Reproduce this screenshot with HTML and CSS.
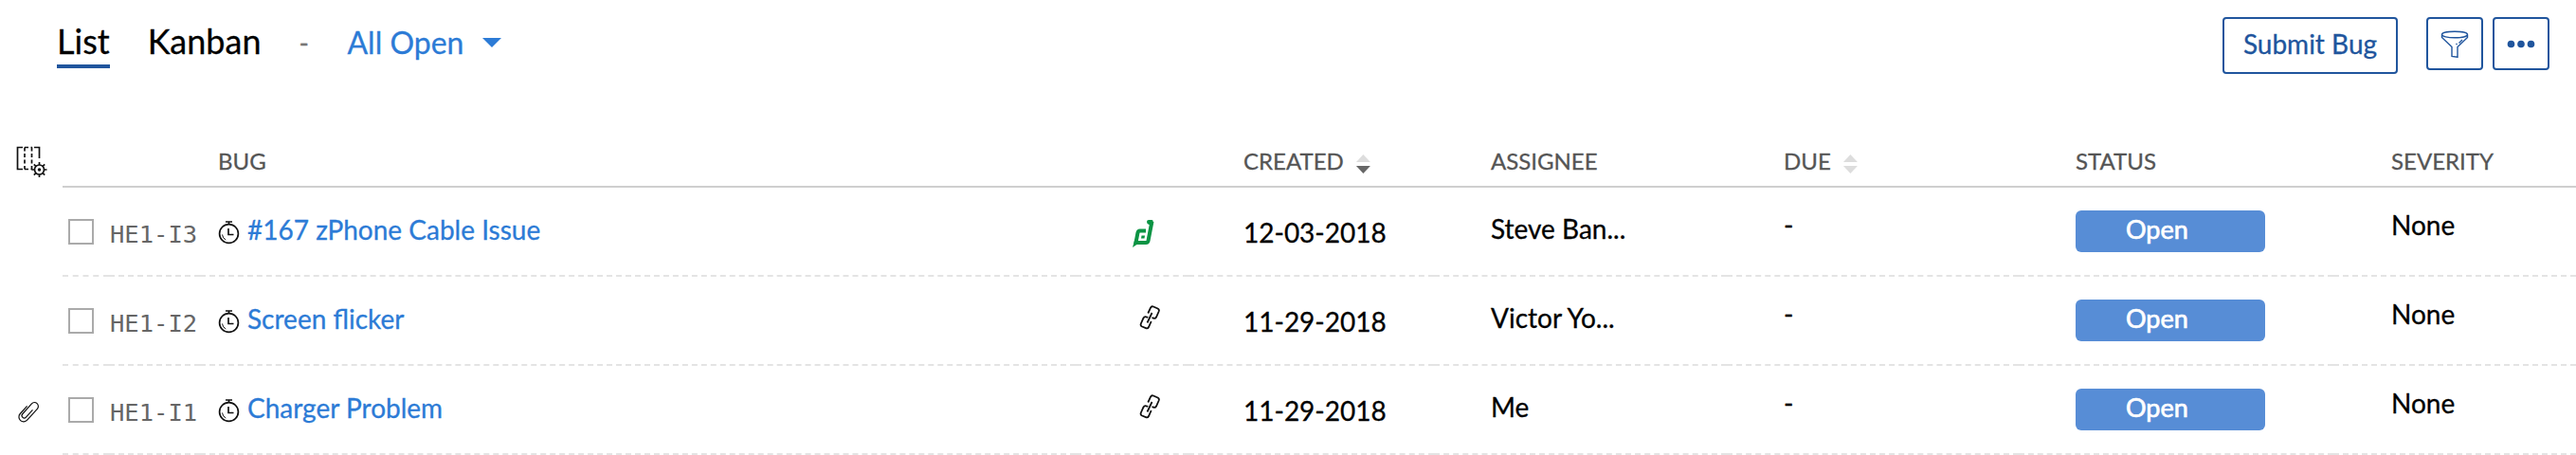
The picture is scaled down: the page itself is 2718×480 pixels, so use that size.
FILE: index.html
```html
<!DOCTYPE html>
<html lang="en">

<head>
    <meta charset="UTF-8">
    <meta name="viewport" content="width=device-width, initial-scale=1.0">
    <title>Bugs</title>
    <link rel="stylesheet" href="styles.css">
</head>

<body>
    <svg class="defs">
        <symbol id="watch" viewBox="0 0 24 26">
            <circle cx="11.500" cy="14.500" r="9.900" />
            <path d="M8 2h7M11.500 2v2.500M11 9v6.500h5.500" />
            <path class="thin" d="M4.500 15.500q.5 4 3.800 5.500" />
        </symbol>
        <symbol id="link" viewBox="0 0 24 28">
            <path d="M9.300 9.500l2.700-5.800q1-2 3-1.200l4.500 2q2 1 1.200 3l-2.700 6q-1 2-3 1.200l-1.500-.6" />
            <path d="M12.700 18l-2.700 6q-1 2-3 1.200l-4-1.700q-2-1-1.200-3l2.700-6q1-2 3-1.200l1.800.6M13.500 9l-5 10.500" />
        </symbol>
    </svg>
    <header>
        <nav>
            <a class="tab on">List</a>
            <a class="tab">Kanban</a>
            <span class="sep">-</span>
            <a class="view">All Open</a>
            <i class="caret"></i>
        </nav>
        <div class="bt">
            <button class="submit">Submit Bug</button>
            <button class="sq">
                <svg width="30" height="30" viewBox="0 0 30 30">
                    <ellipse cx="15" cy="5.500" rx="13.500" ry="3.300" />
                    <path d="M1.500 6v2.500l10.500 10v10l6 .8v-10.800l10.500-10V6M19.500 14.500l3.500-3.500M16.500 16l1-1" />
                </svg>
            </button>
            <button class="sq">
                <svg class="dots" width="30" height="30" viewBox="0 0 30 30">
                    <circle cx="4.500" cy="15.500" r="3.800" />
                    <circle cx="15" cy="15.500" r="3.800" />
                    <circle cx="25.500" cy="15.500" r="3.800" />
                </svg>
            </button>
        </div>
    </header>
    <main>
        <div class="row head">
            <span class="side">
                <svg width="34" height="38" viewBox="0 0 34 38">
                    <path d="M7 1.500H1.500v23H7M19 1.500h5.500V13" />
                    <path class="dash" d="M9 1.500v23M16.500 1.500v23M9 1.500h8M9 24.500h8" />
                    <circle cx="24.500" cy="25" r="5" />
                    <circle class="dot" cx="24.500" cy="25" r="1.800" />
                    <path d="M24.500 17v3M24.500 30v3M16.500 25h3M29.500 25h3M18.800 19.300l2 2M28.200 28.700l2 2M30.200 19.300l-2 2M20.800 28.700l-2 2" />
                </svg>
            </span>
            <div class="cells">
                <span></span>
                <span></span>
                <span class="bug">BUG</span>
                <span></span>
                <span class="date">CREATED <i class="sort down"></i></span>
                <span class="who">ASSIGNEE</span>
                <span class="due">DUE <i class="sort"></i></span>
                <span class="status">STATUS</span>
                <span class="sev">SEVERITY</span>
            </div>
        </div>
        <div class="row">
            <span class="side"></span>
            <div class="cells">
                <span><i class="box"></i></span>
                <span class="id">HE1-I3</span>
                <span class="bug"><svg class="watch"><use href="#watch" /></svg><a>#167 zPhone Cable Issue</a></span>
                <span class="ic">
                    <svg class="desk" width="24" height="30" viewBox="0 0 24 30">
                        <path class="frame" d="M14 11.500H7.500q-1.500 0-2 2l-2 10.500h10.500q2 0 2.500-2L20 4H18" />
                        <path d="M2.500 20l-2.500 9 6-4zM15 2q0-2 2-2h3q2 0 1.600 2l-.6 3.500-3.500-.5q-2.500-.5-2.500-3zM9.500 16.500h3.500l-.5 3h-3.500z" />
                    </svg>
                </span>
                <span class="date">12-03-2018</span>
                <span class="who">Steve Ban...</span>
                <span class="due">-</span>
                <span class="status"><b>Open</b></span>
                <span class="sev">None</span>
            </div>
        </div>
        <div class="row">
            <span class="side"></span>
            <div class="cells">
                <span><i class="box"></i></span>
                <span class="id">HE1-I2</span>
                <span class="bug"><svg class="watch"><use href="#watch" /></svg><a>Screen flicker</a></span>
                <span class="ic"><svg class="link"><use href="#link" /></svg></span>
                <span class="date">11-29-2018</span>
                <span class="who">Victor Yo...</span>
                <span class="due">-</span>
                <span class="status"><b>Open</b></span>
                <span class="sev">None</span>
            </div>
        </div>
        <div class="row">
            <span class="side">
                <svg class="clip" width="26" height="26" viewBox="0 0 26 26">
                    <path transform="rotate(42 13 13)" d="M7.500 9V20a5 5 0 0 0 10 0V4a4 4 0 0 0-8 0V18.500a2.500 2.500 0 0 0 5 0V8" />
                </svg>
            </span>
            <div class="cells">
                <span><i class="box"></i></span>
                <span class="id">HE1-I1</span>
                <span class="bug"><svg class="watch"><use href="#watch" /></svg><a>Charger Problem</a></span>
                <span class="ic"><svg class="link"><use href="#link" /></svg></span>
                <span class="date">11-29-2018</span>
                <span class="who">Me</span>
                <span class="due">-</span>
                <span class="status"><b>Open</b></span>
                <span class="sev">None</span>
            </div>
        </div>
    </main>
</body>

</html>
```
FILE: styles.css
```css
* {
    box-sizing: border-box;
}

body {
    margin: 0;
    height: 480px;
    overflow: hidden;
    background: #fff;
    color: #000;
    font-family: Lato, "Liberation Sans", sans-serif;
    font-size: 28px;
    -webkit-text-stroke: .3px;
}

svg {
    display: block;
    flex: none;
    fill: none;
    stroke: #111;
    stroke-width: 2;
}

.defs {
    width: 0;
    height: 0;
    position: absolute;
}

header {
    display: flex;
    justify-content: space-between;
    height: 142px;
    padding: 18px 28px 0 60px;
}

nav {
    display: flex;
    align-items: flex-start;
}

.tab {
    height: 54px;
    font-size: 36px;
    line-height: 50px;
    margin-right: 40px;
}

.on {
    border-bottom: 4px solid #20559d;
}

.sep {
    width: 51px;
    font-size: 28px;
    line-height: 54px;
    color: #777;
}

.view {
    font-size: 32px;
    line-height: 53px;
    color: #2c7bd6;
}

.caret {
    margin: 22px 0 0 20px;
    border: 10px solid transparent;
    border-top-color: #2c7bd6;
    border-bottom: 0;
}

.bt {
    display: flex;
    align-items: flex-start;
}

button {
    background: #fff;
    border: 2px solid #20559d;
    border-radius: 4px;
    color: #20559d;
    font-family: inherit;
    padding: 0;
}

.submit {
    width: 185px;
    height: 60px;
    padding-bottom: 4px;
    font-size: 28px;
    margin-right: 30px;
}

.sq {
    display: flex;
    align-items: center;
    justify-content: center;
    width: 60px;
    height: 56px;
}

.sq + .sq {
    margin-left: 10px;
}

.sq svg {
    stroke: #20559d;
    stroke-width: 1.4;
}

.sq .dots {
    fill: #20559d;
    stroke: none;
}

.row {
    display: flex;
    height: 94px;
}

.side {
    width: 66px;
    padding: 36px 0 0 17px;
}

.clip {
    stroke-width: 1.2;
}

.cells {
    flex: 1;
    display: grid;
    grid-template-columns: 49px 96px 924px 119px 259px 309px 308px 332px 1fr;
    grid-template-rows: 100%;
}

.cells span {
    border-bottom: 2px dashed #e4e4e4;
    white-space: nowrap;
}

.sort {
    display: inline-block;
    width: 15px;
    height: 20px;
    margin-left: 7px;
    vertical-align: -4px;
    background: #ddd;
    clip-path: polygon(50% 0, 100% 40%, 0 40%, 0 60%, 100% 60%, 50% 100%, 0 60%, 0 40%);
}

.down {
    background: linear-gradient(#ddd 50%, #666 50%);
}

.box {
    display: block;
    width: 27px;
    height: 27px;
    margin: 33px 0 0 6px;
    border: 2px solid #aaa;
}

.id {
    padding-left: 1px;
    color: #666;
    font-family: "DejaVu Sans Mono", monospace;
    font-size: 25.5px;
    line-height: 98px;
    -webkit-text-stroke: 0;
}

.bug {
    display: flex;
    padding-left: 19px;
    line-height: 88px;
    color: #2c7bd6;
}

.watch {
    width: 24px;
    height: 26px;
    margin: 34px 7px 0 0;
    stroke-width: 1.7;
}

.thin {
    stroke-width: 1;
}

.ic {
    padding: 29px 0 0 60px;
}

.link {
    width: 24px;
    height: 28px;
    margin-left: 7px;
    stroke-width: 1.8;
}

.desk {
    margin-top: 5px;
    fill: #0b9444;
    stroke: none;
}

.desk .frame {
    fill: none;
    stroke: #0b9444;
    stroke-width: 4;
}

.date {
    padding-left: 58px;
    line-height: 94px;
}

.who,
.due,
.status,
.sev {
    padding-left: 60px;
}

.who {
    line-height: 86px;
}

.due,
.sev {
    line-height: 78px;
}

.sev {
    padding-left: 61px;
}

.status b {
    display: block;
    width: 200px;
    height: 44px;
    margin-top: 24px;
    padding-left: 53px;
    border-radius: 6px;
    background: #578dd6;
    color: #fff;
    font-size: 27px;
    font-weight: 400;
    line-height: 40px;
    -webkit-text-stroke: .7px;
}

.head {
    height: 56px;
    font-size: 24px;
    color: #555;
}

.head .side {
    padding-top: 12px;
}

.head .cells span {
    border-bottom: 2px solid #cfcfcf;
    color: #555;
    line-height: 56px;
}

.head svg {
    stroke-width: 1.7;
}

.head .dash {
    stroke-dasharray: 4 2.5;
}

.head .dot {
    fill: #111;
    stroke: none;
}
```
